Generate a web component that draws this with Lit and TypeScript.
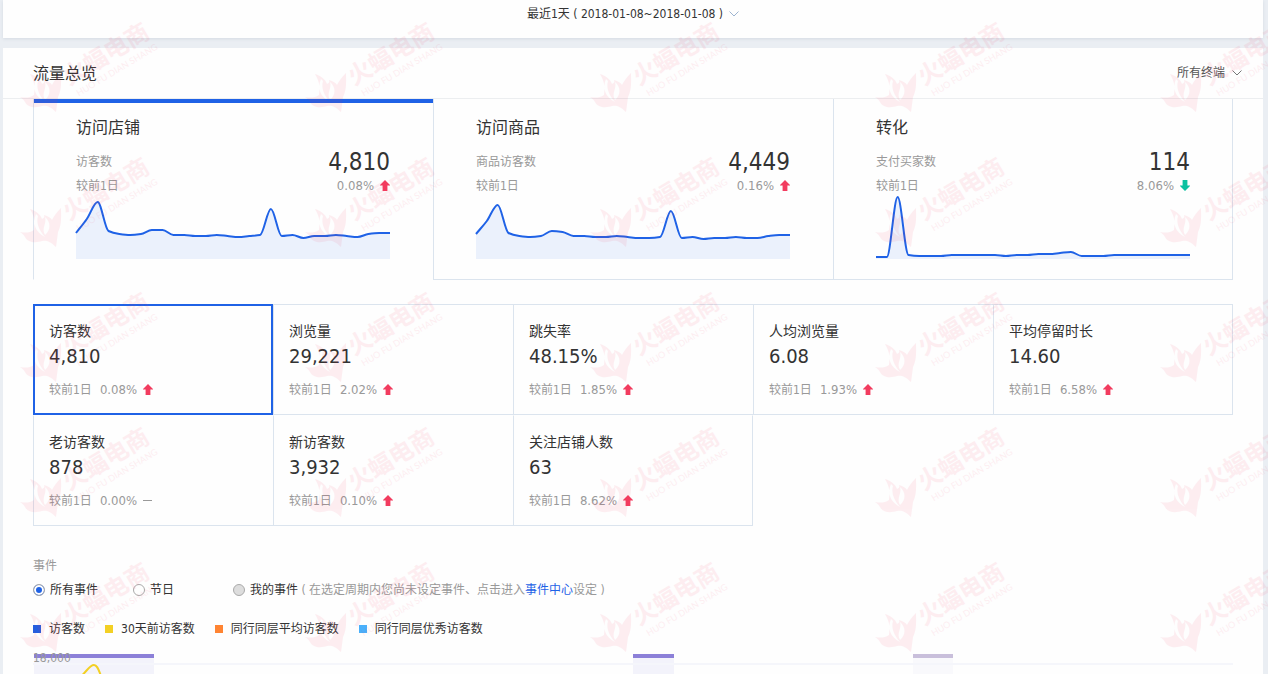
import { LitElement, html, css, svg } from "lit";
import { customElement, property, state } from "lit/decorators.js";
import { classMap } from "lit/directives/class-map.js";

type Trend = "up" | "down" | "flat";

const base = css`
  * {
    box-sizing: border-box;
  }
  button,
  select {
    font: inherit;
    color: inherit;
    background: none;
    border: 0;
    padding: 0;
    margin: 0;
    text-align: left;
    cursor: pointer;
  }
`;

@customElement("trend-mark")
class TrendMark extends LitElement {
  @property() trend: Trend = "up";
  static styles = css`
    :host {
      display: inline-flex;
      width: 10px;
      height: 12px;
    }
    svg {
      width: 10px;
      height: 12px;
    }
    .up {
      fill: #f23c5f;
    }
    .down {
      fill: #0bc1a0;
    }
    .flat {
      fill: #999;
    }
  `;
  render() {
    const d = {
      up: "M5 0 10 5V5.6H7.4V11H2.6V5.6H0V5Z",
      down: "M5 11 10 6V5.4H7.4V0H2.6V5.4H0V6Z",
      flat: "M0 5H9V6H0Z",
    }[this.trend];
    return html`<svg viewBox="0 0 10 12" aria-hidden="true"><path class=${this.trend} d=${d}></path></svg>`;
  }
}

@customElement("spark-line")
class SparkLine extends LitElement {
  @property({ attribute: false }) values: number[] = [];
  static styles = css`
    :host {
      display: block;
      height: 61px;
    }
    svg {
      display: block;
      width: 100%;
      height: 100%;
      overflow: visible;
    }
    .fill {
      fill: #ebf1fc;
    }
    .line {
      fill: none;
      stroke: #1f62e6;
      stroke-width: 2;
      vector-effect: non-scaling-stroke;
    }
  `;
  /* Monotone cubic interpolation through evenly spaced points. */
  private curve(v: number[], step: number) {
    const slope = v.map((y, i) => {
      if (i === 0 || i === v.length - 1) return 0;
      const a = (y - v[i - 1]) / step;
      const b = (v[i + 1] - y) / step;
      return a * b <= 0 ? 0 : (2 * a * b) / (a + b);
    });
    slope[0] = (v[1] - v[0]) / step;
    let d = `M0 ${v[0]}`;
    for (let i = 1; i < v.length; i++) {
      const x0 = (i - 1) * step;
      const x1 = i * step;
      const h = step / 3;
      d += `C${x0 + h} ${v[i - 1] + slope[i - 1] * h} ${x1 - h} ${v[i] - slope[i] * h} ${x1} ${v[i]}`;
    }
    return d;
  }
  render() {
    const w = 314;
    const line = this.curve(this.values.map((n) => 61 - n), w / (this.values.length - 1));
    return html`<svg viewBox="0 0 314 61" preserveAspectRatio="none" aria-hidden="true">
      <path class="fill" d=${`${line}V61H0Z`}></path>
      <path class="line" d=${line}></path>
    </svg>`;
  }
}

@customElement("water-mark")
class WaterMark extends LitElement {
  static styles = css`
    :host {
      position: absolute;
      inset: 0;
      overflow: hidden;
      pointer-events: none;
      user-select: none;
    }
    .tiles {
      display: grid;
      grid-template-columns: repeat(auto-fill, 285px);
      grid-auto-rows: 135px;
      margin: 15px -285px 0 20px;
    }
    svg {
      width: 285px;
      height: 135px;
      overflow: visible;
    }
    path {
      fill: #f2305a;
      fill-rule: evenodd;
    }
    text {
      fill: #f2305a;
    }
    .mark {
      opacity: 0.08;
    }
    .name {
      font: 700 24px "Noto Sans CJK SC", sans-serif;
    }
    .latin {
      font: 9px Lato, "Open Sans", sans-serif;
    }
  `;
  render() {
    return html`<div class="tiles" aria-hidden="true">
      ${Array.from({ length: 25 }, () => html`<svg viewBox="0 0 285 135">
        <g class="mark">
          <path
            d="M0 82C5 83 10 83 14 80C15 73 15 67 10 59C16 61 20 64 22 69C24 68 25 67 24 65C28 66 31 68 32 70C34 66 37 62 41 58C41 66 42 74 38 82L36 97C30 91 26 90 22 91C16 93 8 93 5 87C4 85 2 83 0 82ZM16 64C12 73 15 82 25 87C19 80 16 73 18 66ZM25 67C27 74 21 78 25 85C31 80 31 72 25 67Z"
          ></path>
          <g transform="translate(49 71) rotate(-31)">
            <text class="name">火蝠电商</text>
            <text class="latin" x="3" y="14">HUO FU DIAN SHANG</text>
          </g>
        </g>
      </svg>`)}
    </div>`;
  }
}

interface Card {
  title: string;
  label: string;
  value: string;
  rate: string;
  trend: Trend;
  values: number[];
}

const cards: Card[] = [
  {
    title: "访问店铺", label: "访客数", value: "4,810", rate: "0.08%", trend: "up",
    values: [26, 40, 57, 28, 25, 24, 25, 29, 29, 24, 24, 23, 23, 24, 23, 22, 23, 24, 50, 23, 24, 21, 23, 23, 24, 23, 22, 25, 26, 26],
  },
  {
    title: "访问商品", label: "商品访客数", value: "4,449", rate: "0.16%", trend: "up",
    values: [25, 38, 54, 26, 23, 22, 23, 28, 27, 23, 23, 22, 22, 23, 22, 21, 21, 22, 48, 21, 22, 20, 21, 21, 22, 21, 21, 23, 24, 24],
  },
  {
    title: "转化", label: "支付买家数", value: "114", rate: "8.06%", trend: "down",
    values: [2, 2, 62, 4, 3, 3, 3, 4, 4, 4, 4, 4, 3, 4, 4, 5, 5, 6, 7, 3, 3, 3, 4, 4, 4, 4, 4, 4, 4, 4],
  },
];

const metrics: [string, string, string, Trend][] = [
  ["访客数", "4,810", "0.08%", "up"],
  ["浏览量", "29,221", "2.02%", "up"],
  ["跳失率", "48.15%", "1.85%", "up"],
  ["人均浏览量", "6.08", "1.93%", "up"],
  ["平均停留时长", "14.60", "6.58%", "up"],
  ["老访客数", "878", "0.00%", "flat"],
  ["新访客数", "3,932", "0.10%", "up"],
  ["关注店铺人数", "63", "8.62%", "up"],
];

const legend: [string, string][] = [
  ["访客数", "blue"],
  ["30天前访客数", "yellow"],
  ["同行同层平均访客数", "orange"],
  ["同行同层优秀访客数", "sky"],
];

@customElement("app-root")
class AppRoot extends LitElement {
  @state() private card = 0;
  @state() private metric = 0;

  static styles = [
    base,
    css`
      :host {
        display: flex;
        flex-direction: column;
        gap: 10px;
        min-height: 100vh;
        padding: 0 5px 0 3px;
        position: relative;
        overflow: hidden;
        background: #eaeef3;
        color: #333;
        font: 12px/20px "DejaVu Sans Condensed", "Noto Sans CJK SC", sans-serif;
      }
      .period {
        display: flex;
        justify-content: center;
        height: 38px;
        padding-top: 4px;
        background: #fefefe;
        box-shadow: 0 1px 3px #d5dbe2;
      }
      .period button {
        display: flex;
        align-items: center;
        gap: 6px;
        height: 20px;
      }
      .chevron {
        width: 10px;
        height: 6px;
        fill: none;
        stroke: #9db4d0;
      }
      .chevron.dark {
        stroke: #777;
      }
      .panel {
        flex: 1;
        display: flex;
        flex-direction: column;
        background: #fefefe;
      }
      .head {
        display: flex;
        justify-content: space-between;
        align-items: center;
        height: 51px;
        padding: 0 21px 0 30px;
        border-bottom: 1px solid #eceef0;
      }
      h2,
      h3 {
        margin: 0;
        font-size: 16px;
        line-height: 24px;
        font-weight: 400;
      }
      h2 {
        padding-top: 2px;
      }
      .terminal {
        display: flex;
        align-items: center;
        gap: 6px;
        color: #555;
      }
      .terminal select {
        appearance: none;
        outline: none;
      }
      .body {
        flex: 1;
        display: flex;
        flex-direction: column;
        padding: 0 30px;
      }
      .cards {
        display: grid;
        grid-template-columns: repeat(3, 1fr);
      }
      .card {
        display: block;
        padding: 17px 43px 20px 42px;
        border-left: 1px solid #dbe4ee;
        border-bottom: 1px solid #dbe4ee;
      }
      .card:last-child {
        padding-right: 42px;
        border-right: 1px solid #dbe4ee;
      }
      .card.on {
        border-bottom-color: transparent;
        background: linear-gradient(#1f62e6, #1f62e6) top / 100% 4px no-repeat;
      }
      .line {
        display: flex;
        justify-content: space-between;
        align-items: center;
        height: 24px;
        color: #999;
      }
      .line.first {
        margin-top: 10px;
      }
      .total {
        font-size: 24px;
        color: #333;
      }
      .rate {
        display: flex;
        align-items: center;
        gap: 6px;
        font-size: 13px;
      }
      .metrics {
        display: grid;
        grid-template-columns: repeat(5, 1fr);
        margin-top: 24px;
      }
      .metric {
        display: flex;
        flex-direction: column;
        padding: 16px 15px 14px;
        border: 1px solid #dbe4ee;
        border-right-width: 0;
      }
      .metric:nth-child(n + 6) {
        border-top-color: transparent;
      }
      .metric:nth-child(5n),
      .metric:last-child {
        border-right-width: 1px;
      }
      .metric.on {
        outline: 2px solid #1f62e6;
        outline-offset: -2px;
      }
      .name {
        font-size: 14px;
      }
      .value {
        font-size: 20px;
        line-height: 30px;
      }
      .versus {
        display: flex;
        align-items: center;
        gap: 8px;
        margin-top: 9px;
        color: #999;
      }
      .events {
        margin: 30px 0 0;
        padding: 0;
        border: 0;
        min-width: 0;
      }
      .events legend {
        padding: 0;
        color: #999;
      }
      .options {
        display: flex;
        margin-top: 4px;
        color: #999;
      }
      .option {
        display: flex;
        align-items: center;
        gap: 5px;
        min-width: 100px;
        color: #333;
      }
      .option.own {
        min-width: 0;
      }
      input {
        appearance: none;
        width: 12px;
        height: 12px;
        margin: 0;
        border: 1px solid #aaa;
        border-radius: 50%;
        background: #fefefe;
      }
      input:checked {
        background: #1f62e6;
        box-shadow: inset 0 0 0 2px #fefefe;
      }
      input:disabled {
        background: #ddd;
      }
      a {
        color: #1f62e6;
        text-decoration: none;
      }
      .legend {
        display: flex;
        gap: 20px;
        margin: 19px 0 0;
        padding: 0;
        list-style: none;
      }
      .legend li {
        display: flex;
        align-items: center;
        gap: 8px;
      }
      .swatch {
        width: 8px;
        height: 8px;
      }
      .blue {
        background: #245fdf;
      }
      .yellow {
        background: #f3d024;
      }
      .orange {
        background: #ff8432;
      }
      .sky {
        background: #4ab0fb;
      }
      .chart {
        flex: 1;
        min-height: 20px;
        margin-top: 15px;
        position: relative;
      }
      .chart svg {
        position: absolute;
        width: 100%;
        height: 100%;
        overflow: visible;
      }
      .axis {
        fill: #999;
      }
      .band {
        fill: #f3f3fb;
      }
      .cap {
        fill: #8c80d8;
      }
      .pale .band {
        fill: #f9f9fc;
      }
      .pale .cap {
        fill: #c9bfdb;
      }
      .grid {
        fill: #f5f6fb;
      }
      .past {
        fill: none;
        stroke: #f3d024;
        stroke-width: 2;
      }
    `,
  ];

  private chevron(tone: string) {
    return html`<svg class="chevron ${tone}" viewBox="0 0 10 6" aria-hidden="true"><path d="M.5 .5 5 5 9.5 .5"></path></svg>`;
  }

  private band(x: number, width: number, pale = false) {
    return svg`<g class=${pale ? "pale" : ""}>
      <rect class="band" x=${x} y="0" width=${width} height="100%"></rect>
      <rect class="cap" x=${x} y="0" width=${width} height="4"></rect>
    </g>`;
  }

  render() {
    return html`
      <header class="period">
        <button type="button">最近1天 ( 2018-01-08~2018-01-08 ) ${this.chevron("")}</button>
      </header>
      <main class="panel">
        <div class="head">
          <h2>流量总览</h2>
          <label class="terminal">
            <select aria-label="所有终端"><option>所有终端</option></select>
            ${this.chevron("dark")}
          </label>
        </div>
        <div class="body">
          <div class="cards">
            ${cards.map((c, i) => html`<button
              type="button"
              class=${classMap({ card: true, on: i === this.card })}
              @click=${() => (this.card = i)}
            >
              <h3>${c.title}</h3>
              <div class="line first"><span>${c.label}</span><span class="total">${c.value}</span></div>
              <div class="line">
                <span>较前1日</span>
                <span class="rate">${c.rate}<trend-mark .trend=${c.trend}></trend-mark></span>
              </div>
              <spark-line .values=${c.values}></spark-line>
            </button>`)}
          </div>
          <div class="metrics">
            ${metrics.map(([name, value, rate, trend], i) => html`<button
              type="button"
              class=${classMap({ metric: true, on: i === this.metric })}
              @click=${() => (this.metric = i)}
            >
              <span class="name">${name}</span>
              <span class="value">${value}</span>
              <span class="versus">
                <span>较前1日</span>
                <span class="rate">${rate}<trend-mark .trend=${trend}></trend-mark></span>
              </span>
            </button>`)}
          </div>
          <fieldset class="events">
            <legend>事件</legend>
            <div class="options">
              <label class="option"><input type="radio" name="event" checked />所有事件</label>
              <label class="option"><input type="radio" name="event" />节日</label>
              <label class="option own"><input type="radio" name="event" disabled />我的事件</label>
              <span>&nbsp;( 在选定周期内您尚未设定事件、点击进入<a href="#events">事件中心</a>设定 )</span>
            </div>
          </fieldset>
          <ul class="legend">
            ${legend.map(([text, tone]) => html`<li><span class="swatch ${tone}"></span>${text}</li>`)}
          </ul>
          <div class="chart">
            <svg aria-hidden="true">
              ${this.band(1, 120)} ${this.band(600, 41)} ${this.band(880, 40, true)}
              <rect class="grid" x="0" y="9" width="100%" height="2"></rect>
              <path class="past" d="M46 24C54 18 56 11 61 11C65 11 66 18 69 24"></path>
              <text class="axis" x="0" y="8">18,000</text>
            </svg>
          </div>
        </div>
      </main>
      <water-mark></water-mark>
    `;
  }
}
